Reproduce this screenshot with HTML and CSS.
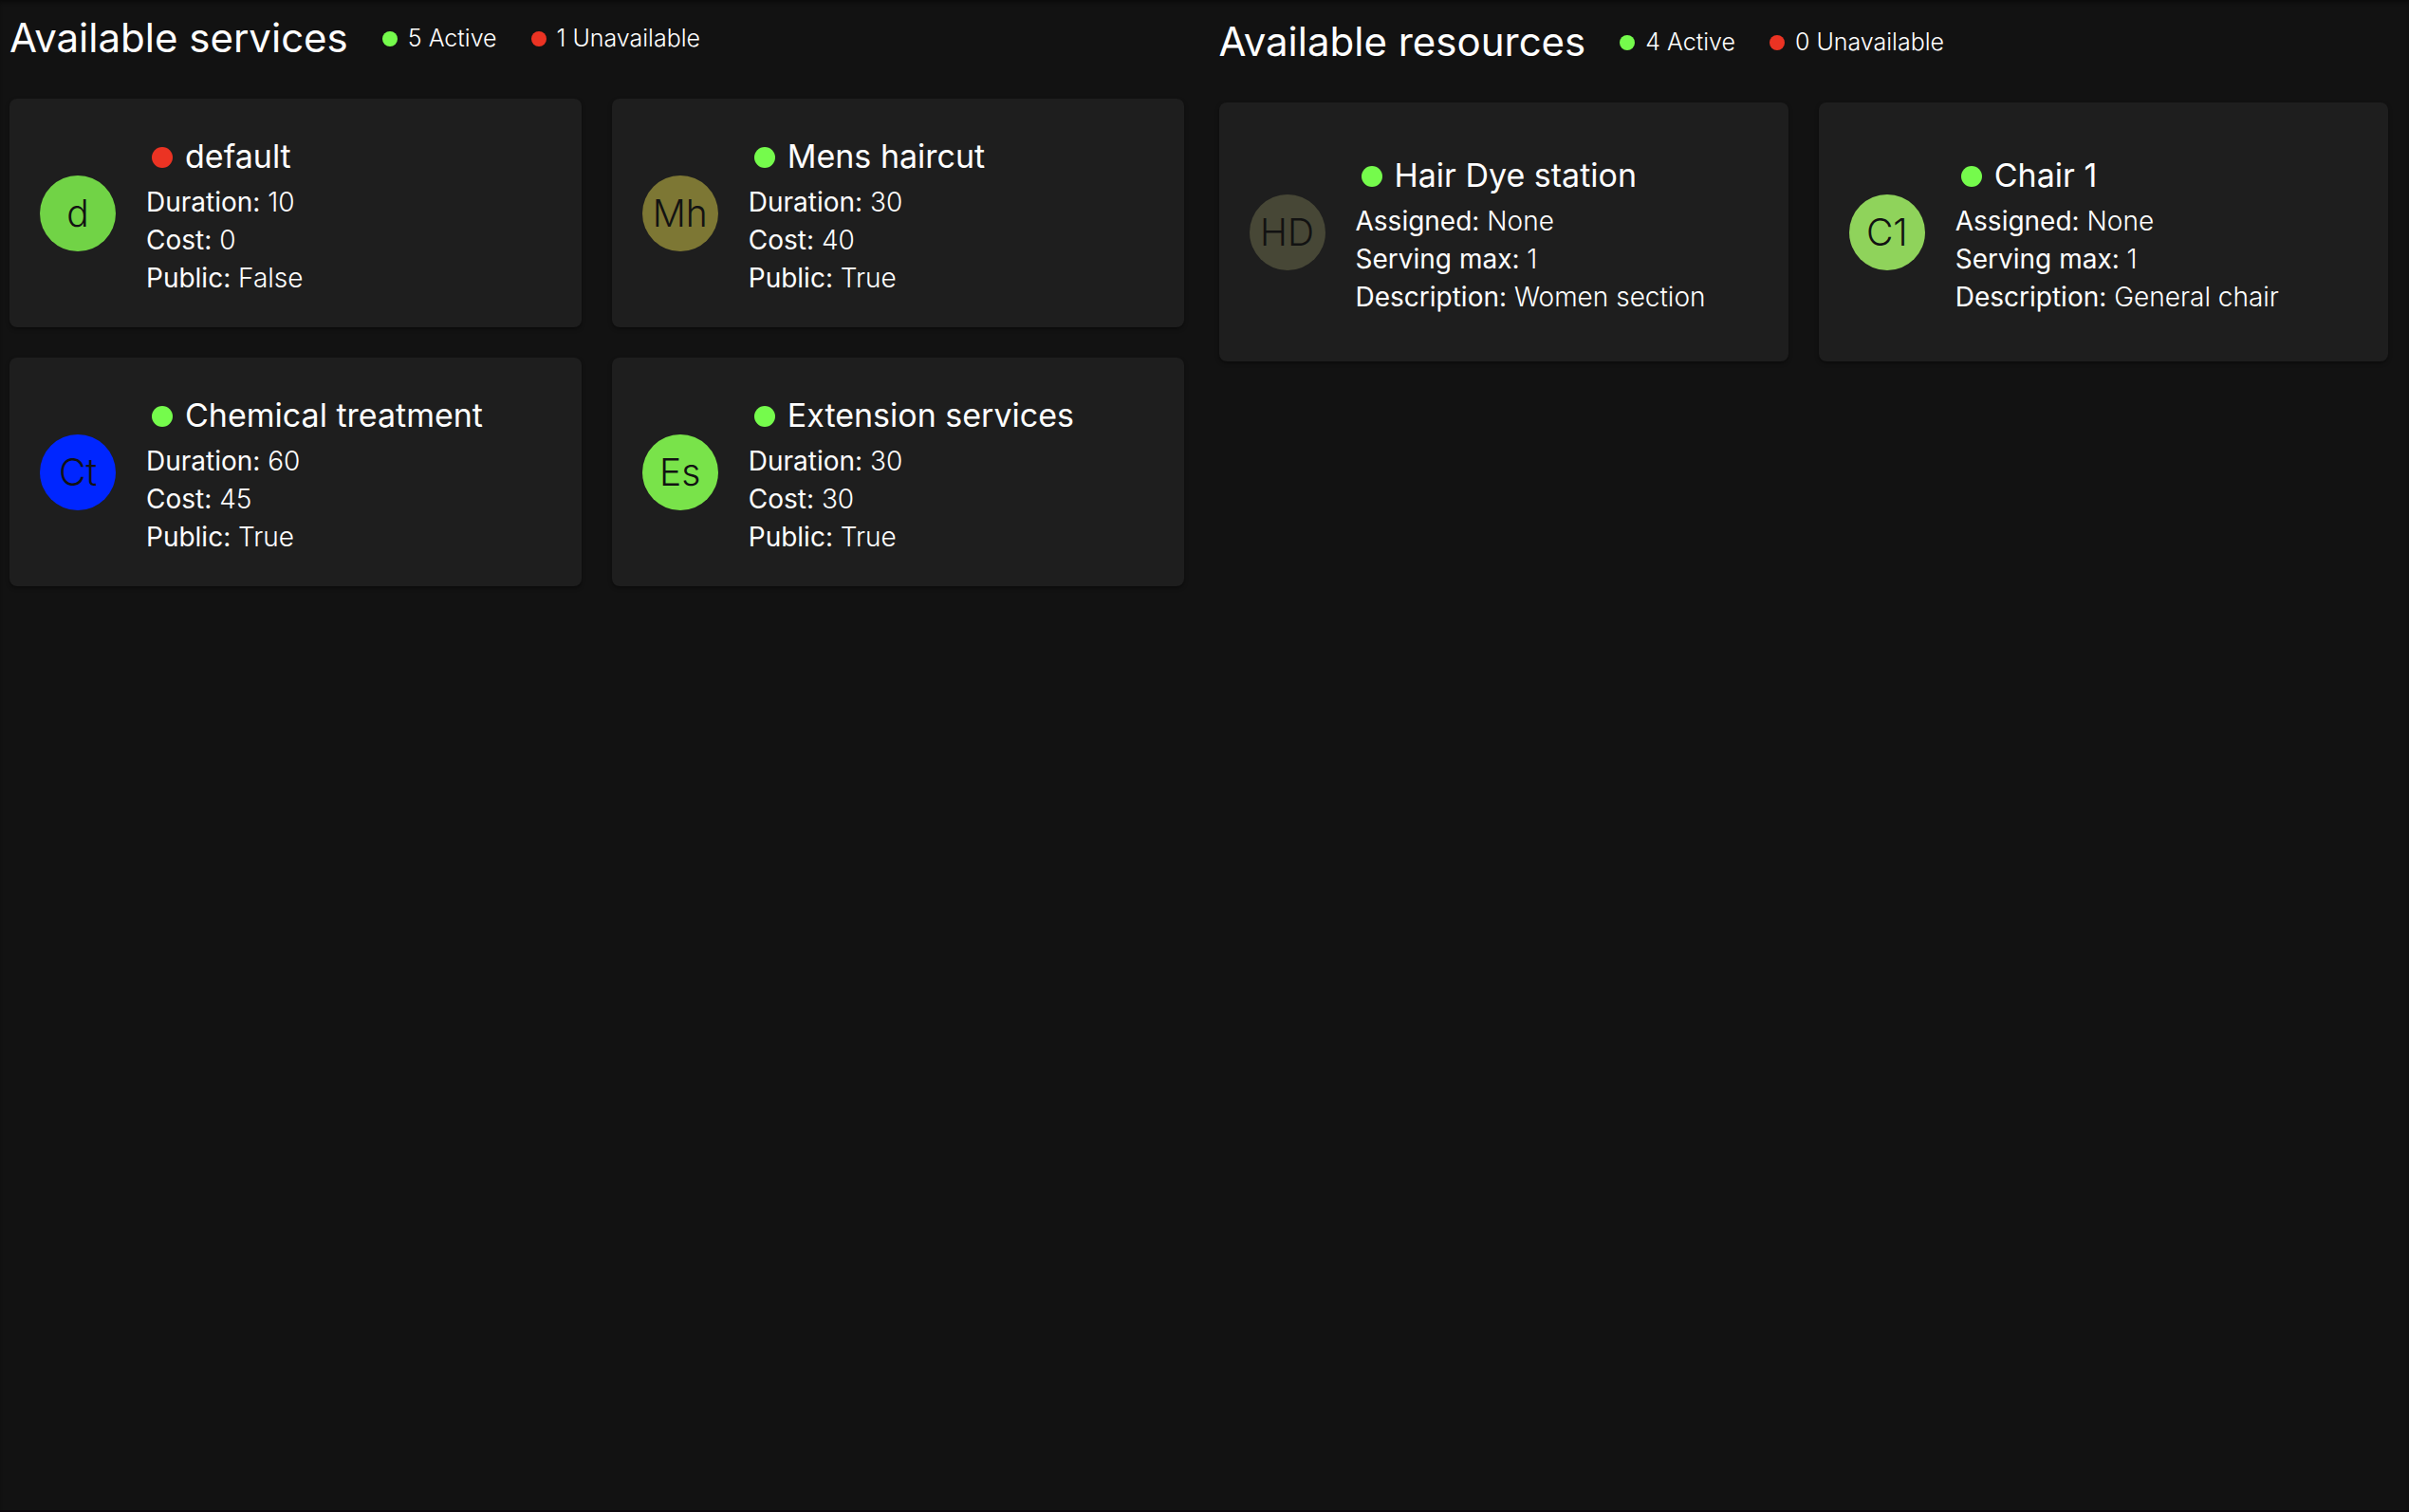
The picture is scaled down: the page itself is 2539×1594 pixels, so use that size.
FILE: index.html
```html
<!DOCTYPE html>
<html lang="en">
<head>
<meta charset="utf-8">
<meta name="viewport" content="width=device-width, initial-scale=1">
<title>Services and resources</title>
<link rel="stylesheet" href="styles.css">
</head>
<body>
<main class="dashboard">
  <section class="panel services">
    <header class="panel-header">
      <h2 class="panel-title">Available services</h2>
      <p class="stat"><span class="dot active"></span>5 Active</p>
      <p class="stat"><span class="dot unavailable"></span>1 Unavailable</p>
    </header>
    <div class="cards">
      <article class="card">
        <div class="avatar" style="background: #71d346">d</div>
        <div class="info">
          <h3 class="card-title"><span class="dot large unavailable"></span>default</h3>
          <p class="row"><b>Duration:</b> 10</p>
          <p class="row"><b>Cost:</b> 0</p>
          <p class="row"><b>Public:</b> False</p>
        </div>
      </article>
      <article class="card">
        <div class="avatar" style="background: #7d7734">Mh</div>
        <div class="info">
          <h3 class="card-title"><span class="dot large active"></span>Mens haircut</h3>
          <p class="row"><b>Duration:</b> 30</p>
          <p class="row"><b>Cost:</b> 40</p>
          <p class="row"><b>Public:</b> True</p>
        </div>
      </article>
      <article class="card">
        <div class="avatar" style="background: #0026ff">Ct</div>
        <div class="info">
          <h3 class="card-title"><span class="dot large active"></span>Chemical treatment</h3>
          <p class="row"><b>Duration:</b> 60</p>
          <p class="row"><b>Cost:</b> 45</p>
          <p class="row"><b>Public:</b> True</p>
        </div>
      </article>
      <article class="card">
        <div class="avatar" style="background: #79e34a">Es</div>
        <div class="info">
          <h3 class="card-title"><span class="dot large active"></span>Extension services</h3>
          <p class="row"><b>Duration:</b> 30</p>
          <p class="row"><b>Cost:</b> 30</p>
          <p class="row"><b>Public:</b> True</p>
        </div>
      </article>
    </div>
  </section>
  <section class="panel resources">
    <header class="panel-header">
      <h2 class="panel-title">Available resources</h2>
      <p class="stat"><span class="dot active"></span>4 Active</p>
      <p class="stat"><span class="dot unavailable"></span>0 Unavailable</p>
    </header>
    <div class="cards">
      <article class="card">
        <div class="avatar" style="background: #474736">HD</div>
        <div class="info">
          <h3 class="card-title"><span class="dot large active"></span>Hair Dye station</h3>
          <p class="row"><b>Assigned:</b> None</p>
          <p class="row"><b>Serving max:</b> 1</p>
          <p class="row"><b>Description:</b> Women section</p>
        </div>
      </article>
      <article class="card">
        <div class="avatar" style="background: #8fd35b">C1</div>
        <div class="info">
          <h3 class="card-title"><span class="dot large active"></span>Chair 1</h3>
          <p class="row"><b>Assigned:</b> None</p>
          <p class="row"><b>Serving max:</b> 1</p>
          <p class="row"><b>Description:</b> General chair</p>
        </div>
      </article>
    </div>
  </section>
</main>
</body>
</html>
```
FILE: styles.css
```css
* {
  box-sizing: border-box;
  margin: 0;
}

body {
  background: #121212;
  color: #fff;
  font-family: Inter, "Open Sans", sans-serif;
  font-weight: 300;
}

.dashboard {
  display: grid;
  grid-template-columns: 1fr 1fr;
  min-height: 100vh;
  border-bottom: 2px solid #0b060b;
  box-shadow: inset 0 4px 4px -2px #0a0a0a;
}

.services {
  padding: 8px 22px 32px 10px;
}

.resources {
  padding: 12px 22px 32px 15px;
}

.panel-header {
  display: flex;
  align-items: center;
  height: 64px;
  margin-bottom: 32px;
}

.panel-title {
  margin-right: 36px;
  font-size: 42px;
  font-weight: 400;
  line-height: 64px;
}

.stat {
  display: flex;
  align-items: center;
  gap: 11px;
  margin-right: 36px;
  font-size: 25px;
  line-height: 40px;
}

.dot {
  width: 16px;
  height: 16px;
  flex: none;
  margin-top: 2px;
  border-radius: 50%;
}

.dot.large {
  width: 22px;
  height: 22px;
}

.active {
  background: #75fb4c;
}

.unavailable {
  background: #eb3323;
}

.cards {
  display: grid;
  grid-template-columns: 1fr 1fr;
  gap: 32px;
}

.card {
  display: flex;
  align-items: center;
  gap: 32px;
  padding: 32px;
  border-radius: 8px;
  background: #1e1e1e;
  box-shadow: 0 2px 4px rgba(0, 0, 0, 0.4);
}

.resources .card {
  padding: 48px 32px;
}

.avatar {
  display: flex;
  flex: none;
  align-items: center;
  justify-content: center;
  width: 80px;
  height: 80px;
  border-radius: 50%;
  color: #121212;
  font-size: 39px;
}

.card-title {
  display: flex;
  align-items: center;
  gap: 13px;
  padding-left: 6px;
  font-size: 34px;
  font-weight: 400;
  line-height: 57px;
}

.row {
  font-size: 28px;
  line-height: 40px;
}

.row b {
  font-weight: 400;
}
```
